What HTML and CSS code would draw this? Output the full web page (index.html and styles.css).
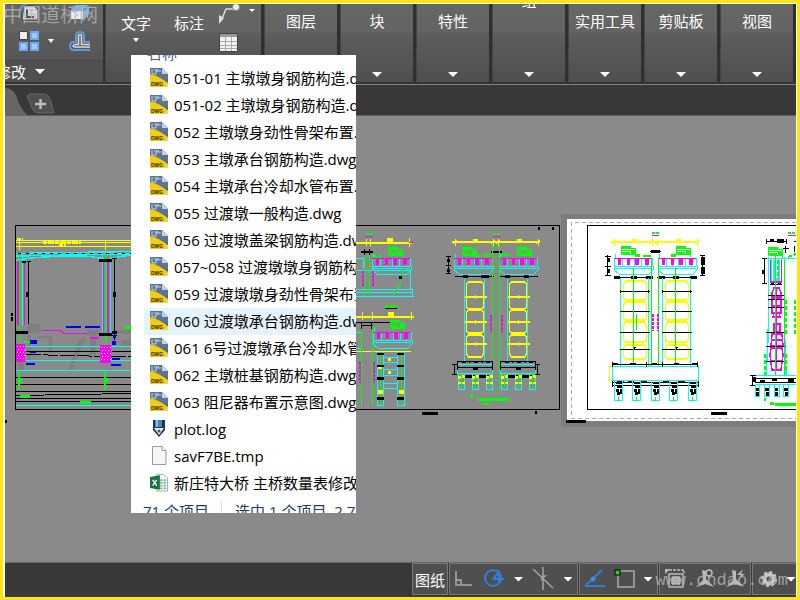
FILE: index.html
```
<!DOCTYPE html>
<html lang="zh">
	<head>
		<meta charset="utf-8">
		<title>CAD</title>
		<link rel="stylesheet" href="styles.css">
	</head>
	<body>
		<div class="app">
			<header class="ribbon">
				<section class="panel modify">
					<div class="tools">
						<button class="tool" aria-label="旋转"><svg width="22" height="18" viewBox="0 0 22 18"><path d="M2 7Q3 1 9 0" fill="none" stroke="#5b9bd8" stroke-width="2"/><path d="M6 2H16L20 6V16H4Z" fill="#ddd" stroke="#444"/><path d="M9 5V13H16" fill="none" stroke="#555" stroke-width="2"/></svg></button>
						<button class="tool right" aria-label="拉伸"><svg width="22" height="18" viewBox="0 0 22 18"><path d="M2 7L7 1H20V11L15 15H2Z" fill="#7db2ea"/><path d="M2 7H14V15H2Z" fill="#e8eef5"/><path d="M14 7L20 1" stroke="#40658c"/></svg></button>
					</div>
					<div class="tools second">
						<button class="tool" aria-label="阵列"><svg width="22" height="22" viewBox="0 0 22 22"><path d="M1.500 1.500h8v8h-8z" fill="#eee" stroke="#444"/><path d="M12 1h9v9h-9zM1 12h9v9H1zM12 12h9v9h-9z" fill="#6ca9ee"/><path d="M14 3h5v5h-5zM3 14h5v5H3zM14 14h5v5h-5z" fill="#a3cbf8"/></svg></button>
						<i class="arrow small"></i>
						<button class="tool right" aria-label="偏移"><svg width="22" height="22" viewBox="0 0 22 22"><path d="M21 20H5Q1 20 1 16T5 12H7V6Q7 2 11 2T15 6V12H21" fill="none" stroke="#5b9bd8" stroke-width="2"/><path d="M21 17H6Q4 17 4 16T6 14.500H9.500V6Q9.500 4.500 11 4.500T12.500 6V14.500H21" fill="none" stroke="#ddd" stroke-width="1.500"/></svg></button>
					</div>
					<button class="panel-title"><span>修改</span><i class="arrow"></i></button>
				</section>
				<section class="panel annotate">
					<div class="annotate-tools">
						<button class="word">文字<i class="arrow small"></i></button>
						<button class="word">标注</button>
						<div class="stack">
							<button class="tool" aria-label="引线"><svg width="40" height="20" viewBox="0 0 40 20"><path d="M2 17L7 5H14" fill="none" stroke="#ddd" stroke-width="1.500"/><path d="M0 20V11L5 14Z" fill="#ddd"/><circle cx="17" cy="3" r="3.500" fill="#eee" stroke="#888"/><path d="M30 5h6l-3 3z" fill="#fff"/></svg></button>
							<button class="tool" aria-label="表格"><svg width="20" height="20" viewBox="0 0 20 20"><path d="M.5.5h18v18H.5z" fill="#f2f2f2" stroke="#444"/><path d="M1 1h17v3H1z" fill="#999"/><path d="M1 8.500h17M1 12.500h17M1 15.500h17M6.500 4v14M12.500 4v14" stroke="#aaa"/></svg></button>
						</div>
					</div>
				</section>
				<section class="panel"><button class="group"><span>图层</span><i class="arrow"></i></button></section>
				<section class="panel"><button class="group"><span>块</span><i class="arrow"></i></button></section>
				<section class="panel"><button class="group"><span>特性</span><i class="arrow"></i></button></section>
				<section class="panel"><button class="group raised"><span>组</span><i class="arrow"></i></button></section>
				<section class="panel"><button class="group"><span>实用工具</span><i class="arrow"></i></button></section>
				<section class="panel"><button class="group"><span>剪贴板</span><i class="arrow"></i></button></section>
				<section class="panel"><button class="group"><span>视图</span><i class="arrow"></i></button></section>
			</header>
			<nav class="tabs">
				<button class="new-tab" aria-label="新建"><svg width="52" height="28" viewBox="0 0 52 28"><path d="M0 0Q9 0 12 10T23 28H0Z" fill="#666"/><path d="M22 8Q23 6 26 6H37Q43 6 45 11L49 25H33Q29 25 27 20Z" fill="#505050" stroke="#686868"/><path d="M30 16h11M35.500 11v10" stroke="#bbb" stroke-width="2.500"/></svg></button>
			</nav>
			<main class="canvas">
				<svg class="drawing" viewBox="5 116 791 446" preserveAspectRatio="xMinYMin slice">
					<defs>
						<!-- box girder, 40 x 20 -->
						<g id="girder">
							<path class="c" d="M1 0V5M0 4H38M0 12H38M0 4V12M38 4V12M8 5V12M14 5V12M20 5V12M27 5V12M33 5V12M0 12V16L5 20H35L39 16V12M0 14H38"/>
							<path class="m" d="M0 4H38"/>
							<path fill="#f0f" d="M4 5h3v6H4zM13 5h3v6h-3zM21 5h4v6h-4zM31 5h4v6h-4z"/>
						</g>
						<g id="notes">
							<path fill="#0f0" d="M1 0h10v2H1zM1 2h14v1H1zM2 4h14v1H2zM1 6h9v2H1zM11 5h5v3h-5zM3 8h12v1H3z"/>
							<path class="g" d="M1.500 0V9M15.500 2V11"/>
						</g>
						<g id="dim">
							<path class="y" stroke-width="2" d="M0 3H88"/>
							<path class="y" d="M3 0V7M41 0V7M46 0V7M86 0V7M1 5l4-4M39 5l4-4M44 5l4-4M84 5l4-4"/>
							<path fill="#ff0" d="M21 0h5v4h-5zM65 0h5v4h-5z"/>
						</g>
						<!-- pier shaft with three hollow cells -->
						<g id="shaft">
							<path class="c" stroke-width="1.500" d="M0 0V82M20 0V82"/>
							<path class="y" stroke-width="1.500" d="M4 3H17L19 5V28L17 30H4L2 28V5ZM4 31H17L19 33V52L17 54H4L2 52V33ZM4 56H17L19 58V75L17 78H4L2 75V58ZM0 18H22M0 43H22M0 65H22M11 16V20M11 41V45M11 63V67"/>
						</g>
						<g id="pile">
							<path class="c" d="M.5 0V16H6.500V0"/><path class="g" d="M3.500 0V14"/><path fill="#ff0" d="M0 2h3v3H0zM4 1h3v3H4zM0 8h3v2H0zM4 8h3v2H4z"/>
						</g>
						<g id="cap">
							<path class="c" d="M0 4H35V13H0Z"/>
							<path class="k" d="M0 1H35M0 7H35M0 0V9M12 0V2M25 0V2M35 0V9M5 15H31"/><path fill="#000" d="M4 0h4v2H4zM16 0h4v2h-4zM28 0h4v2h-4zM15 6h5v3h-5zM7 14h8v3H7zM20 14h8v3h-8z"/>
							<use href="#pile" x="0" y="13"/><use href="#pile" x="14" y="13"/><use href="#pile" x="28" y="13"/>
						</g>
						<g id="shaft4">
							<path class="c" stroke-width="1.500" d="M0 0V88M28 0V88"/>
							<path class="y" stroke-width="1.500" d="M5 3H24L26 6V20L24 22H5L3 20V6ZM5 24H24L26 27V40L24 42H5L3 40V27ZM5 44H24L26 47V62L24 64H5L3 62V47ZM5 67H24L26 70V79L24 81H5L3 79V70Z"/>
							<path class="k" d="M-1 13H29M-1 33H29M-1 54H29M-1 71H29M0 12V15M28 12V15M12 72l3-3"/>
							<path class="g" d="M13-10V86"/>
						</g>
						<g id="pile2">
							<path class="c" d="M0 0V19H8V0"/><path class="g" d="M4 16V20"/><path fill="#000" d="M1 1h6v2H1zM2 5h5v2H2zM1 8h3v3H1zM5 8h2v5H5zM2 11h3v3H2z"/>
						</g>
					</defs>

					<!-- elevation of the bridge -->
					<path class="k" stroke-width="1.500" d="M15.500 225.500H559.500V409.500H15.500Z"/>
					<path class="y" d="M16 240.500H131M16 242.500H131M16 246.500H131M19.500 241V250M105.500 241V250"/>
					<path class="y" stroke-width="3" stroke-dasharray="4 1 6 1" d="M17 239.500h6M43 242.500h38M59 245.500h7"/>
					<path class="c" stroke-width="1.500" d="M16 253.500L131 251.500M16 256L131 254M16 260.500Q26 258 45 257T78 256T104 259M110 259Q120 256 131 255"/>
					<path class="c" d="M22.500 254V326M102.500 254V333M110.500 254V333"/>
					<path class="k" stroke-dasharray="3 5" d="M18 253.500H131"/>
					<path class="m" stroke-width="2" d="M18 261V325M108 262V333"/>
					<path class="m" d="M24.500 261V325M103.500 262V333M41 330.500H61L64 333.500H92"/>
					<path class="g" d="M19.500 254V345M21.500 262V320M105.500 254V345M106.500 258V340"/>
					<path class="k" d="M28.500 261V326M27 261.500h4M27 326h4M114.500 258V340M112 258.500h5M112 335h5"/>
					<path fill="#7f7f7f" d="M27 324h13v9H27zM37 336h15v17h-3v-15h-12zM87 330h12v5H87zM90 335h6v20h-6zM79 340l7-3-14 33-4 1zM117 330h14v4h-14zM122 340h9v5h-9zM18 360h6v10h-6zM27 335h4v25h-4z"/>
					<path fill="#000" d="M26 292h3v5h-3zM113 292h3v5h-3zM99 259h13v3H99zM16 331h12v3H16zM99 333h13v3H99zM11 313h2v3h-2zM11 317h2v4h-2zM22 261h4v2h-4zM112 331h5v3h-5z"/>
					<path fill="#0000e8" d="M66 326h15v2H66zM85 326h15v2H85zM30 340h7v4h-7zM30 351h6v2h-6zM26 363h9v2h-9zM113 335h3v3h-3zM112 358h8v3h-8zM111 364h10v2h-10zM112 341h4v4h-4z"/>
					<path class="c" d="M26 346.500H100M112 346.500H131M26 360.500H131M16 370.500H131M16 405.500H131"/>
					<path class="k" d="M26 351.500H100M112 351.500H131M16 377.500H131M16 384.500H131M16 391.500H131M16 395.500L131 393.500M16 398.500H131M16 401.500H131"/>
					<path class="k" stroke-dasharray="15 2" d="M26 354.500L131 357"/>
					<path fill="#f0f" d="M16 344h9v18h-9zM100 345h11v18h-11zM90 337h9v2h-9z"/>
					<path fill="none" stroke="#ffd0d0" stroke-dasharray="1 2" d="M17 346.500h8M18 349.500h7M17 352.500h8M18 355.500h7M17 358.500h8M101 347.500h10M102 350.500h9M101 353.500h10M102 356.500h9M101 359.500h10"/>
					<path fill="#0f0" d="M18 372h2v18h-2zM20 379h2v4h-2zM104 372h2v18h-2zM106 378h2v4h-2zM20 395h10v3H20zM80 401h11v3H80zM125 326h6v3h-6zM24 341h6v2h-6z"/>

					<!-- half sections behind the file list -->
					<path class="y" stroke-width="2" d="M356 243H412M356 317H414"/>
					<path class="y" d="M366.500 239V246M370.500 239V246M409.500 238V247M362.500 312V320M372.500 312V320M411.500 312V320M356 351.500H411"/>
					<path fill="#ff0" d="M387 238h6v4h-6zM388 312h6v4h-6z"/>
					<use href="#girder" x="372" y="254"/>
					<use href="#girder" x="373" y="328"/>
					<use href="#notes" x="387" y="247"/><use href="#notes" x="389" y="320"/>
					<path class="c" d="M356 258.500H363V268M356 270.500H410V289.500M356 289.500H412V296.500M356 292.500H412M356 296.500H414M356 332.500H362M356 348.500H362M377.500 352V405.500H383.500V352M397.500 352V405.500H404.500V352M383 357.500H397V362.500H383M383 369.500H397V375.500H383M383 383.500H397V388.500H383"/>
					<path class="g" d="M364.500 248V296M369.500 248V296M405 268L400 279V284L393 296M361.500 325V405M372.500 325V405M380.500 352V404M401.500 352V404"/>
					<path class="g" stroke-width="2" d="M366 234h3M370 234h3"/>
					<path class="m" d="M365 236.500h8M409 242.500h4"/>
					<path fill="none" stroke="#f0f" stroke-width="2" stroke-dasharray="3 1" d="M362.500 271V287M372.500 271V287M359.500 362V383M373.500 362V383"/>
					<path class="g" stroke-width="3" stroke-dasharray="3 1" d="M385 306h13M374 256h8"/>
					<path class="k" d="M385 308.500H397M356 322.500H390M361 325.500H373M361.500 322V329M371.500 322V329M364.500 249v6M369.500 249v6"/>
					<path fill="#000" d="M399 276h3v3h-3zM361 251h12v2h-12z"/>
					<path fill="#000" d="M377 353h7v2h-7zM397 353h7v2h-7zM377 365h7v2h-7zM397 365h7v2h-7zM377 377h7v3h-7zM397 377h7v3h-7zM377 397h7v3h-7zM397 397h7v3h-7z"/>
					<path fill="#ff0" d="M388 358h3v3h-3zM388 371h3v3h-3zM378 390h5v4h-5zM399 390h5v4h-5zM378 367h4v2h-4z"/>

					<!-- transition pier, front view -->
					<use href="#dim" x="452" y="239"/>
					<path class="g" stroke-width="2" d="M493 234h3M497 234h3"/><path class="m" d="M493 236.500h7"/>
					<use href="#notes" x="461" y="247"/><use href="#notes" x="516" y="247"/>
					<path fill="#0f0" d="M473 255h8v2h-8zM484 254h6v3h-6zM500 254h10v2h-10z"/>
					<use href="#girder" x="454" y="254"/><use href="#girder" x="499" y="254"/>
					<path class="k" d="M455 276.500H494M499 276.500H538M448.500 256V274M446 256.500h5M446 265h5M446 273.500h5M491 252.500H502"/>
					<path fill="#000" d="M463 275h5v3h-5zM481 275h8v3h-8zM505 275h5v3h-5zM524 275h5v3h-5zM447 259h3v3h-3zM447 269h3v3h-3zM491 251h11v2h-11z"/>
					<use href="#shaft" x="464.500" y="279"/><use href="#shaft" x="507.500" y="279"/>
					<path class="g" d="M492.500 244V392M499.500 244V392"/>
					<path fill="none" stroke="#f0f" stroke-width="2" stroke-dasharray="3 1" d="M490.500 315V332M501.500 315V332"/>
					<use href="#cap" x="457.500" y="360.500"/><use href="#cap" x="500.500" y="360.500"/>
					<path class="k" d="M454.500 364V374M452 364.500h5M452 374.500h5M537.500 364V374M535 364.500h5M535 374.500h5"/>
					<path fill="#0f0" d="M470 394h3v3h-3zM478 398h31v3h-31zM483 403h6v2h-6zM471 396h2v2h-2z"/>
					<path fill="#000" d="M422 412h16v3h-16zM535 411h2v3h-2zM538 227h2v3h-2zM552 227h2v3h-2zM5 420h2v3h-2z"/>

					<!-- active sheet -->
					<path fill="#7d7d7d" d="M561 214H796V427H561Z"/>
					<path fill="#fff" d="M567 219H796V421H567Z"/>
					<path fill="none" stroke="#aaa" stroke-dasharray="4 3" d="M796 222.500H571.500V418.500H796"/>
					<path class="k" stroke-width="1.500" d="M800 225.500H587.500V409.500H800"/>
					<path fill="#000" d="M566 420h20v3h-20zM711 412h16v3h-16z"/>
					<use href="#dim" x="611" y="239"/>
					<path class="g" stroke-width="2" d="M652 233h3M656 233h3"/><path class="m" d="M652 235.500h7"/>
					<use href="#notes" x="620" y="246"/><use href="#notes" x="675" y="246"/>
					<path fill="#0f0" d="M636 254h4v3h-4zM643 255h8v2h-8zM671 254h5v3h-5z"/>
					<use href="#girder" x="614" y="254"/><use href="#girder" x="658" y="254"/>
					<path class="k" d="M614 277.500H653M657 277.500H697M607.500 255V275M605 256h6M605 266h6M605 275h6M702.500 255V275M700 255.500h5M700 275h5M650 251.500h11"/>
					<path fill="#000" d="M614 276h6v3h-6zM631 276h6v3h-6zM646 276h7v3h-7zM659 276h6v3h-6zM673 276h6v3h-6zM690 276h7v3h-7zM607 258h3v4h-3zM607 269h3v4h-3zM701 257h4v8h-4zM701 267h4v7h-4zM651 250h9v3h-9z"/>
					<use href="#shaft4" x="620.500" y="278"/><use href="#shaft4" x="662.500" y="278"/>
					<path class="g" d="M651.500 258V366M658.500 258V366M636 314V330"/>
					<path fill="none" stroke="#f0f" stroke-width="2" stroke-dasharray="3 1" d="M653 314V331M658 314V331"/>
					<path class="c" d="M612.500 366.500H698.500V380.500H612.500Z"/>
					<path class="y" d="M609.500 366V380M608 366.500h4M608 380.500h4"/>
					<path class="k" d="M612 364.500H698M612 382.500H698M612 385H698M612.500 362V367M646.500 362V367M662.500 362V367M697.500 362V367M612.500 381V387M698.500 381V387"/>
					<path fill="#000" d="M613 363h5v2h-5zM630 363h6v2h-6zM652 363h5v2h-5zM674 363h5v2h-5zM692 363h5v2h-5zM617 381h7v2h-7zM628 381h6v2h-6zM641 381h6v2h-6zM663 381h6v2h-6zM678 381h7v2h-7z"/>
					<use href="#pile2" x="614.500" y="381"/><use href="#pile2" x="632.500" y="381"/><use href="#pile2" x="651.500" y="381"/><use href="#pile2" x="669.500" y="381"/><use href="#pile2" x="688.500" y="381"/>

					<!-- side view, cut off by the window -->
					<path class="g" stroke-width="2" d="M788 233h3M792 233h3"/><path class="m" d="M788 235.500h8"/>
					<path class="k" d="M766 241.500H787M794 241.500H796M766.500 239V244M786.500 239V244M785.500 246V253M783 248h6M794 246v6M764.500 258V284M762 258.500h5M762 283.500h5M770 284H782"/>
					<path fill="#000" d="M770 239h4v3h-4zM777 239h7v4h-7zM762 270h3v4h-3zM771 283h3v2h-3zM778 283h3v2h-3z"/>
					<use href="#notes" x="767" y="247"/>
					<path class="c" stroke-width="1.500" d="M768.500 257V300Q769 330 766 375M784.500 257V300Q784 330 786 375M767 258.500H796M771.500 258V282M781.500 258V282M774 260V280H779V260"/>
					<path class="m" stroke-width="1.500" d="M770.500 260V282H781.500V260M774 288h5l2 5v4h-9v-4zM772 299h9v14h-9zM774 313l-1 4h7l-1-4M774 324h6v8h-6zM772 334h10l1 12h-12zM771 348h11l1 7-2 15h-9l-2-15zM776.500 288V370M772 306h9M771 340h11M770 361h13"/>
					<path class="k" d="M768 295.500h16M768 299.500h16M768 307.500h16M766 332h20M766 346h20M765 361.500h22"/>
					<path class="g" d="M775.500 256V376M784.500 260V376"/><path class="g" stroke-width="2" stroke-dasharray="4 2" d="M777.500 260V279M786 300V335M795 300V335M765 354V375M786 354V370M788 257l8-3"/>
					<path class="c" d="M755 375.500H796M755 384.500H796"/>
					<path class="k" d="M755 378.500H796M755 382H796M752.500 375V386M750 375.500h6M750 385.500h6"/>
					<path fill="#000" d="M752 377h4v5h-4zM760 380h5v2h-5zM772 379h5v2h-5zM788 379h6v3h-6zM755 388h4v3h-4zM756 392h4v4h-4zM765 388h4v3h-4zM766 392h3v4h-3zM774 388h4v3h-4zM775 392h3v4h-3zM784 388h4v3h-4zM785 392h3v4h-3z"/>
					<path class="c" d="M755.500 385V396.500H759.500V385M764.500 385V396.500H769.500V385M774.500 385V396.500H779.500V385M783.500 385V396.500H788.500V385"/>
					<path fill="#0f0" d="M764 398h2v3h-2zM770 402h4v3h-4zM775 403h21v3h-21z"/>
				</svg>
			</main>
			<footer class="status">
				<div class="cell"><button class="space">图纸</button></div>
				<div class="cell wide">
					<button class="tool" aria-label="正交"><svg width="20" height="20" viewBox="0 0 20 20"><path d="M2 2V16H18M2 11H7V16" fill="none" stroke="#aaa" stroke-width="1.500"/></svg></button>
					<button class="tool" aria-label="极轴"><svg width="22" height="20" viewBox="0 0 22 20"><circle cx="10" cy="9" r="8" fill="none" stroke="#2f7fd6" stroke-width="2"/><path d="M10 10H21M10 10L16 3M16 1V13" fill="none" stroke="#2f7fd6" stroke-width="2"/></svg></button>
					<i class="arrow"></i>
					<button class="tool" aria-label="等轴测"><svg width="22" height="24" viewBox="0 0 22 24"><path d="M1 2L21 21M11 0V23M9 13L14 8" stroke="#a5a5a5" stroke-width="1.500"/></svg></button>
					<i class="arrow"></i>
				</div>
				<div class="cell snaps">
					<button class="tool" aria-label="追踪"><svg width="22" height="20" viewBox="0 0 22 20"><path d="M1 17L18 1M1 17H21" stroke="#2f7fd6" stroke-width="2"/><circle cx="9" cy="10" r="2.500" fill="#3c8ee8"/></svg></button>
					<button class="tool" aria-label="捕捉"><svg width="22" height="20" viewBox="0 0 22 20"><path d="M4 2H20V18H4Z" fill="none" stroke="#aaa" stroke-width="1.500"/><path d="M1 1H6V6H1Z" fill="#1ed51e" stroke="#000"/></svg></button>
					<i class="arrow"></i>
				</div>
				<div class="cell notes">
					<button class="tool" aria-label="视口"><svg width="22" height="22" viewBox="0 0 22 22"><path d="M5 2H20V5" fill="none" stroke="#bbb" stroke-width="1.500" stroke-dasharray="3 1"/><path d="M1 1H6L1 6Z" fill="#bbb"/><path d="M5 6H19V19H5Z" fill="none" stroke="#bbb" stroke-width="1.500"/><path d="M8 9H16V16H8Z" fill="#aaa" stroke="#ccc"/></svg></button>
					<button class="tool" aria-label="注释可见性"><svg width="22" height="22" viewBox="0 0 22 22"><path d="M8 2L12 3V11L20 19L11 16L2 19L9 12Z" fill="#b9babc"/><circle cx="15" cy="5" r="3" fill="none" stroke="#b9babc" stroke-width="1.500"/></svg></button>
					<button class="tool" aria-label="自动缩放"><svg width="22" height="22" viewBox="0 0 22 22"><path d="M8 2L12 3V11L20 19L11 16L2 19L9 12Z" fill="#b9babc"/><path d="M19 1L13 7H17L14 12L21 6H17Z" fill="#b9babc"/></svg></button>
				</div>
				<div class="cell gear">
					<button class="tool" aria-label="设置"><svg width="20" height="20" viewBox="0 0 20 20"><circle cx="10" cy="10" r="4.500" fill="none" stroke="#c5c6c8" stroke-width="4"/><circle cx="10" cy="10" r="7" fill="none" stroke="#c5c6c8" stroke-width="2" stroke-dasharray="3 2.500"/></svg></button>
					<i class="arrow"></i>
				</div>
			</footer>
		</div>

		<!-- icons of the file list -->
		<svg class="sprite">
			<symbol id="dwg" viewBox="0 0 18 19"><path d="M0 0H12L18 6V19H0Z" fill="#49617f"/><path d="M0 0H12L18 6V13L0 5Z" fill="#6f8aa8" opacity=".5"/><path d="M12 0V6H18Z" fill="#c5d2df"/><path d="M0 6Q9 8 18 15V19H0Z" fill="#f3cd12"/><path d="M2 1V6H6V3H11M4 2H9" fill="none" stroke="#c6d4e2"/><path d="M14 19L18 15V19Z" fill="#e9d37a"/><text x="1" y="18" font-size="5" font-weight="900" font-family="Liberation Sans, sans-serif" fill="#332b00">DWG</text></symbol>
			<symbol id="log" viewBox="0 0 18 19"><path d="M3 1H15V11L9 18L3 11Z" fill="#28333f"/><path d="M5 1H12V8H5Z" fill="#3e86c8"/><path d="M7 1V8" stroke="#9fd0f4" stroke-width="1.500"/><path d="M4 9H14L9 16Z" fill="#e4edf4"/><circle cx="9" cy="12" r="1.500" fill="#2b5d86"/></symbol>
			<symbol id="tmp" viewBox="0 0 18 19"><path d="M2.500.5H12L16 4.500V18.500H2.500Z" fill="#f6f6f6" stroke="#999"/><path d="M12 .5V4.500H16" fill="#fff" stroke="#999"/></symbol>
			<symbol id="xls" viewBox="0 0 20 20"><path d="M7 1H15L19.500 5V19.500H7Z" fill="#fff" stroke="#9aa59f"/><path d="M11 7.500h7M11 10.500h7M11 13.500h7M11 16.500h7" stroke="#7fb795" stroke-width="2" stroke-dasharray="3 1"/><path d="M0 4L11 2V18L0 16Z" fill="#1b7345"/><path d="M3 7L7.500 13.500M7.500 7L3 13.500" stroke="#fff" stroke-width="1.500"/></symbol>
		</svg>

		<aside class="files">
			<div class="files-head">名称</div>
			<ul>
				<li><a href="#"><svg><use href="#dwg"/></svg>051-01 主墩墩身钢筋构造.dwg</a></li>
				<li><a href="#"><svg><use href="#dwg"/></svg>051-02 主墩墩身钢筋构造.dwg</a></li>
				<li><a href="#"><svg><use href="#dwg"/></svg>052 主墩墩身劲性骨架布置.dwg</a></li>
				<li><a href="#"><svg><use href="#dwg"/></svg>053 主墩承台钢筋构造.dwg</a></li>
				<li><a href="#"><svg><use href="#dwg"/></svg>054 主墩承台冷却水管布置.dwg</a></li>
				<li><a href="#"><svg><use href="#dwg"/></svg>055 过渡墩一般构造.dwg</a></li>
				<li><a href="#"><svg><use href="#dwg"/></svg>056 过渡墩盖梁钢筋构造.dwg</a></li>
				<li><a href="#"><svg><use href="#dwg"/></svg>057~058 过渡墩墩身钢筋构造.dwg</a></li>
				<li><a href="#"><svg><use href="#dwg"/></svg>059 过渡墩墩身劲性骨架布置.dwg</a></li>
				<li class="ac"><a href="#"><svg><use href="#dwg"/></svg>060 过渡墩承台钢筋构造.dwg</a></li>
				<li><a href="#"><svg><use href="#dwg"/></svg>061 6号过渡墩承台冷却水管布置.dwg</a></li>
				<li><a href="#"><svg><use href="#dwg"/></svg>062 主墩桩基钢筋构造.dwg</a></li>
				<li><a href="#"><svg><use href="#dwg"/></svg>063 阻尼器布置示意图.dwg</a></li>
				<li><a href="#"><svg><use href="#log"/></svg>plot.log</a></li>
				<li><a href="#"><svg><use href="#tmp"/></svg>savF7BE.tmp</a></li>
				<li><a href="#"><svg><use href="#xls"/></svg>新庄特大桥 主桥数量表修改</a></li>
			</ul>
			<div class="files-foot"><span>71 个项目</span><span>选中 1 个项目&nbsp; 2.7</span></div>
		</aside>
		<div class="mark mark-top">中国道桥网</div>
		<div class="mark mark-bottom">www.cndao.com</div>
	</body>
</html>
```

FILE: styles.css
```
*{margin: 0;padding: 0;box-sizing: border-box;}
ul li{list-style: none;}
body{
	height: 100vh;
	overflow: hidden;
	position: relative;
	background: #fbe60d;
	font-family: "Open Sans","Noto Sans CJK SC",sans-serif;
	font-size: 15px;
	color: #fff;
}
button{
	border: 0;
	background: none;
	color: inherit;
	font: inherit;
	white-space: nowrap;
	cursor: pointer;
}
svg{
	display: block;
	flex: none;
}
.app{
	height: calc(100vh - 6px);
	margin: 3px;
	border: 1px solid #fff;
	border-left-width: 2px;
	border-bottom: 0;
	display: flex;
	flex-direction: column;
	background: #383838;
}
.arrow{
	width: 10px;
	height: 5px;
	background: #fff;
	clip-path: polygon(0 0,100% 0,50% 100%);
}
.arrow.small{
	width: 6px;
	height: 4px;
}
.tool{
	display: block;
}

/* ribbon */
.ribbon{
	height: 81px;
	flex: none;
	display: flex;
	overflow: hidden;
	background: #333;
	border-bottom: 1px solid #858585;
}
.panel{
	flex: 1 1 0;
	height: 78px;
	min-width: 0;
	overflow: hidden;
	border-right: 3px solid #303030;
	border-left: 1px solid #444;
	background: linear-gradient(#666 0,#646464 28px,#5d5d5d 29px,#4f4f4f 78px);
}
.modify{
	flex: 0 0 100px;
	display: flex;
	flex-direction: column;
	border-left: 0;
	border-right-width: 2px;
}
.tools{
	height: 18px;
	padding: 0 12px 0 13px;
	display: flex;
	align-items: center;
}
.tools.second{
	height: 40px;
}
.tools .arrow{
	margin-left: 8px;
}
.tools .right{
	margin-left: auto;
}
.panel-title{
	flex: 1;
	padding-right: 58px;
	border-top: 1px solid #464646;
	display: flex;
	align-items: center;
	justify-content: flex-end;
	gap: 9px;
	background: #505050;
}
.panel-title .arrow{
	flex: none;
}
.annotate{
	flex: 0 0 159px;
}
.annotate-tools{
	padding: 0 8px 0 15px;
	display: flex;
	gap: 23px;
}
.word{
	padding-top: 8px;
	display: flex;
	flex-direction: column;
	align-items: center;
	align-self: flex-start;
	gap: 4px;
	line-height: 22px;
}
.stack{
	margin-left: -8px;
	display: flex;
	flex-direction: column;
	gap: 9px;
}
.group{
	width: 100%;
	height: 100%;
	padding: 6px 0 5px;
	display: flex;
	flex-direction: column;
	align-items: center;
	justify-content: space-between;
	line-height: 22px;
}
.raised{
	padding-top: 0;
}
.raised span{
	height: 8px;
	display: flex;
	align-items: flex-end;
	overflow: hidden;
}

/* drawing tabs */
.tabs{
	height: 31px;
	flex: none;
	padding-top: 3px;
	border-bottom: 1px solid #606060;
}

/* model space */
.canvas{
	flex: 1;
	min-height: 0;
	background: #8a8a8a;
}
.drawing{
	width: 100%;
	height: 100%;
	shape-rendering: crispEdges;
}
.c,.m,.g,.y,.k{fill: none;}
.c{stroke: #0ff;}
.m{stroke: #f0f;}
.g{stroke: #0f0;}
.y{stroke: #ff0;}
.k{stroke: #000;}

/* status bar */
.status{
	height: 35px;
	flex: none;
	display: flex;
	justify-content: flex-end;
	gap: 1px;
	padding-bottom: 2px;
	border-top: 1px solid #666;
}
.cell{
	padding: 0 4px;
	border: 1px solid #777;
	display: flex;
	align-items: center;
	justify-content: space-between;
	background: #4f4f4f;
}
.cell:first-child{
	width: 36px;
	justify-content: center;
}
.wide{
	width: 129px;
}
.snaps{
	width: 79px;
}
.notes{
	width: 92px;
	padding: 0 4px;
}
.gear{
	width: 44px;
	padding: 0 0 0 6px;
	border-right: 0;
	overflow: hidden;
}
.gear .arrow{
	flex: none;
}

/* file list over the drawing */
.sprite{
	display: none;
}
.files{
	position: absolute;
	left: 131px;
	top: 55px;
	width: 225px;
	height: 458px;
	overflow: hidden;
	background: #fff;
	color: #000;
}
.files-head{
	height: 10px;
	padding-left: 16px;
	display: flex;
	align-items: flex-end;
	overflow: hidden;
	line-height: 24px;
	color: #4c607a;
}
.files li{
	margin-left: 13px;
	overflow: hidden;
}
.files li a{
	height: 27px;
	padding: 0 0 2px 6px;
	display: flex;
	align-items: center;
	gap: 6px;
	white-space: nowrap;
	color: #000;
	text-decoration: none;
}
.files li svg{
	width: 18px;
	height: 19px;
}
.files li.ac{
	background: #e5f3ff;
}
.files-foot{
	padding: 3px 0 0 12px;
	display: flex;
	line-height: 22px;
	white-space: nowrap;
	color: #1e3c6e;
}
.files-foot span + span{
	margin-left: 12px;
	padding-left: 13px;
	border-left: 1px solid #e0e0e0;
}

.mark{
	position: absolute;
	pointer-events: none;
	color: #b4b4b4;
	opacity: 0.8;
}
.mark-top{
	left: 3px;
	top: 0;
	font-family: "Liberation Serif","Noto Sans CJK SC",serif;
	font-size: 19px;
}
.mark-bottom{
	right: 12px;
	bottom: 10px;
	font-family: "Liberation Mono",monospace;
	font-size: 17px;
}
```
